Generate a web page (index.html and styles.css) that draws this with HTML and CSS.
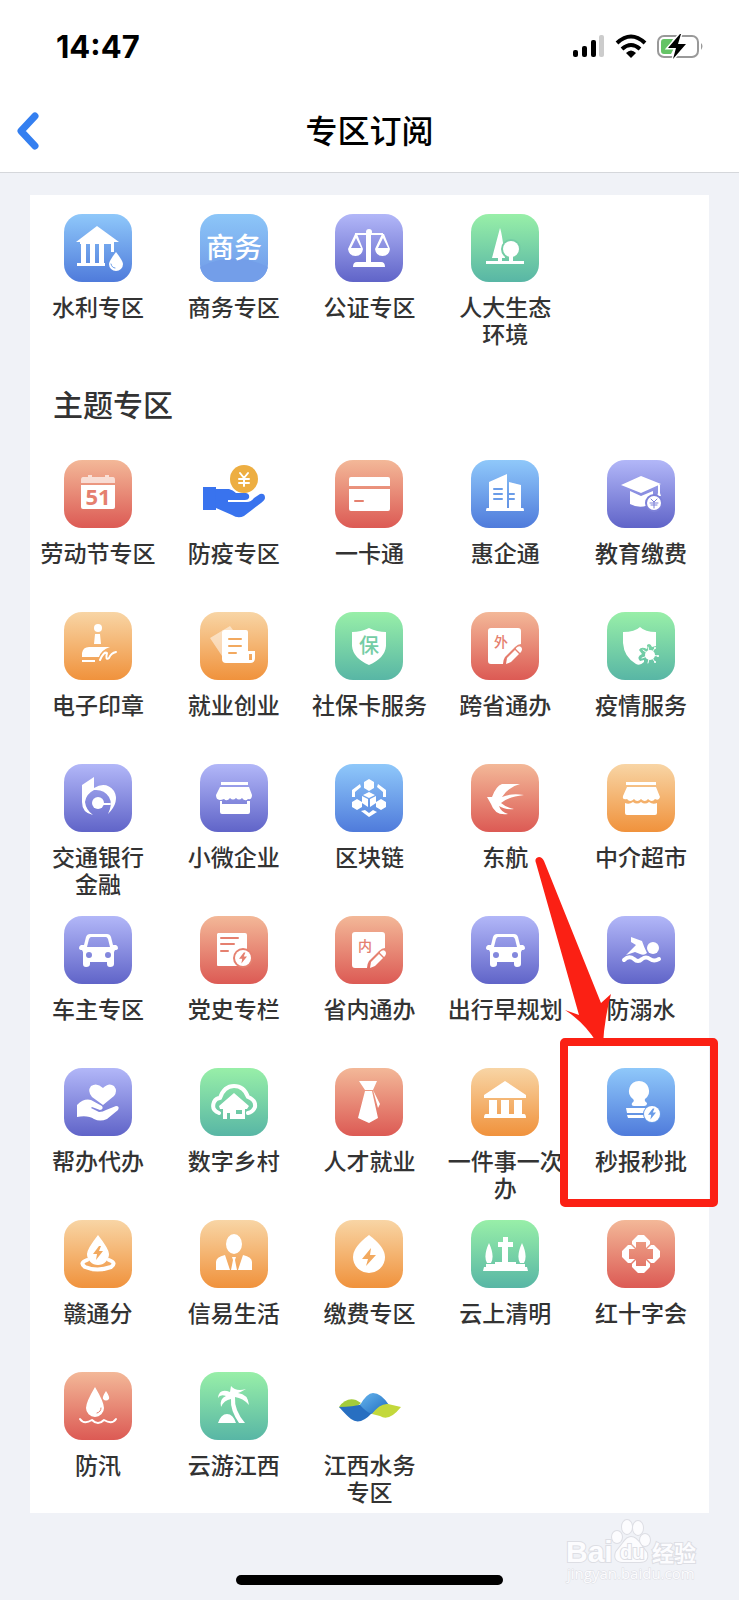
FILE: index.html
```html
<!DOCTYPE html>
<html lang="zh-CN">
<head>
<meta charset="utf-8">
<meta name="viewport" content="width=device-width, initial-scale=1">
<title>专区订阅</title>
<link rel="stylesheet" href="styles.css">
</head>
<body>
<svg class="defs" aria-hidden="true">
  <symbol id="car" viewBox="0 0 68 68">
    <path fill-rule="evenodd" d="M26 18H43Q46 18 47 21L49 29H52Q54 30 54 32Q54 34 51 34L50 36V48Q50 51 46 51Q43 51 43 48V46H26V48Q26 51 22 51Q19 51 19 48V36L18 34Q15 34 15 32Q15 30 17 29H20L22 21Q23 18 26 18ZM27 21Q26 21 25 23L23 31H46L44 23Q43 21 42 21ZM25 36A3 3 0 1 0 25 42A3 3 0 1 0 25 36ZM44 36A3 3 0 1 0 44 42A3 3 0 1 0 44 36Z"/>
  </symbol>
  <symbol id="sheet" viewBox="0 0 68 68">
    <path d="M20 16H47Q50 16 50 19V32Q47 32 44 35L34 45Q32 48 32 52H20Q17 52 17 49V19Q17 16 20 16Z"/>
    <path d="M35 52L36 46L44 38L48 42L40 50Z"/>
    <path d="M45 36Q48 33 50 35Q52 37 50 40L49 41L45 37Z"/>
  </symbol>
  <symbol id="bolt" viewBox="0 0 10 14"><path d="M6 0L0 8H4L3 14L10 5H6L8 0Z"/></symbol>
</svg>

<header class="top">
  <div class="status">
    <span class="time">14:47</span>
    <svg class="status-icons" viewBox="0 0 134 26" aria-label="信号、无线网络、电池">
      <rect x="1" y="16" width="5" height="7" rx="2"/>
      <rect x="10" y="12" width="5" height="11" rx="2"/>
      <rect x="19" y="6" width="5" height="17" rx="2"/>
      <rect x="27" y="1" width="5" height="22" rx="2" fill="#ccc"/>
      <g fill="none" stroke="#000" stroke-width="4">
        <path d="M45 9Q59 -4 73 9"/><path d="M50 15Q59 7 68 15"/>
      </g>
      <path d="M54 19Q59 14 64 19L59 24Z"/>
      <rect x="86" y="2" width="40" height="21" rx="6" fill="none" stroke="#999" stroke-width="2"/>
      <path d="M129 9Q132 12 129 16Z" fill="#999"/>
      <path d="M92 5H101L97 14H102L99 20H92Q89 20 89 17V8Q89 5 92 5Z" fill="#65c466"/>
      <path d="M108 0L96 14H104L101 25L114 10H106L109 0Z" stroke="#fff" stroke-width="3" paint-order="stroke"/>
    </svg>
  </div>
  <div class="nav">
    <button class="back" type="button" aria-label="返回">
      <svg viewBox="0 0 26 40"><path d="M20 5L6 20L20 35" fill="none" stroke="#347ff0" stroke-width="7" stroke-linecap="round" stroke-linejoin="round"/></svg>
    </button>
    <h1>专区订阅</h1>
  </div>
</header>

<main class="card">
  <ul class="grid">
    <li><a href="#"><svg class="tile blue" viewBox="0 0 68 68"><path d="M33 12L55 28H12ZM16 28H50V38H47V30H40V49H41V52H13V49H17V30H16ZM22 30V49H26V30ZM31 30V49H35V30Z" fill-rule="evenodd"/><path d="M52 38Q45 47 45 50A7 7 0 0 0 59 50Q59 47 52 38Z"/><path class="line thin" d="M47 50Q48 54 51 54"/></svg><span>水利专区</span></a></li>
    <li><a href="#"><svg class="tile sky" viewBox="0 0 68 68"><path d="M0 53Q33 36 68 53V68H0Z" fill="#739ee9"/><text x="34" y="44" font-size="28">商务</text></svg><span>商务专区</span></a></li>
    <li><a href="#"><svg class="tile purple" viewBox="0 0 68 68"><circle cx="34" cy="18" r="3"/><path d="M20 19H48V21H36V48H46Q50 48 50 53H18Q18 48 22 48H31V21H20Z"/><path fill-rule="evenodd" d="M20 20L13 35Q14 42 20.500 42Q27 42 28 35L22 20ZM21 24L26 34H16Z"/><path fill-rule="evenodd" d="M47 20L40 35Q41 42 47.500 42Q54 42 55 35L49 20ZM48 24L53 34H43Z"/></svg><span>公证专区</span></a></li>
    <li><a href="#"><svg class="tile green" viewBox="0 0 68 68"><path d="M29 14Q31 19 34 44H31V48H27V44H21Z"/><circle class="cut" cx="40" cy="35" r="10"/><circle cx="40" cy="35" r="8"/><path d="M38 40H42V47H53V50H15V47H38Z"/></svg><span>人大生态<br>环境</span></a></li>
  </ul>

  <h2>主题专区</h2>

  <ul class="grid">
    <li><a href="#"><svg class="tile red" viewBox="0 0 68 68"><path opacity=".65" d="M19 17H24V15H28V17H41V15H45V17H49Q51 17 51 20V23H17V20Q17 17 19 17Z"/><path d="M17 25H51V47Q51 49 49 49H19Q17 49 17 47Z"/><text class="cut num" x="34" y="45" font-size="22">51</text></svg><span>劳动节专区</span></a></li>
    <li><a href="#"><svg class="tile" viewBox="0 0 68 68"><g fill="#3973ee"><path d="M3 27H16V50H3Z"/><path d="M15 29H29Q33 30 36 33H46Q50 34 49 38Q48 40 45 40H28V42H47Q51 42 54 38L60 34Q65 33 65 38Q65 40 61 43L44 56Q38 59 32 55L16 48Z"/></g><circle cx="44" cy="19" r="14" fill="#edae42"/><path class="wline" d="M40 13L44 18L48 13M39 19H49M39 23H49M44 18V26"/></svg><span>防疫专区</span></a></li>
    <li><a href="#"><svg class="tile red" viewBox="0 0 68 68"><path d="M16 17H53Q55 17 55 19V26H14V19Q14 17 16 17ZM14 29H55V49Q55 51 53 51H16Q14 51 14 49Z"/><path class="line" d="M20 41H28"/></svg><span>一卡通</span></a></li>
    <li><a href="#"><svg class="tile blue" viewBox="0 0 68 68"><path d="M18 22L36 14V48H38V22L50 25V48H52Q53 48 53 51H15Q15 48 16 48H18Z"/><path class="line" d="M23 29H31M23 34H31M23 39H31M38 34H43M38 39H43"/></svg><span>惠企通</span></a></li>
    <li><a href="#"><svg class="tile purple" viewBox="0 0 68 68"><path d="M34 16L54 24L34 33L14 25ZM23 31L34 36L46 31V43Q34 50 23 44ZM51 25H53V33L54 36H50L51 33Z"/><circle class="cut" cx="47" cy="43" r="9"/><circle cx="47" cy="43" r="7"/><path class="line thin" d="M44 39L47 42L50 39M43 43H51M44 45H50M47 42V48"/></svg><span>教育缴费</span></a></li>

    <li><a href="#"><svg class="tile orange" viewBox="0 0 68 68"><circle cx="34" cy="16" r="4"/><path d="M31 22H36L37 32H30ZM18 45V41Q19 35 25 35H46Q37 38 35 45ZM18 48H31V50H18Z"/><path class="wline" d="M36 48Q40 39 43 41Q41 49 45 46Q47 41 52 40"/></svg><span>电子印章</span></a></li>
    <li><a href="#"><svg class="tile orange" viewBox="0 0 68 68"><path opacity=".5" d="M10 26L30 14L33 18H22V44Z"/><path fill-rule="evenodd" d="M24 18H46Q48 18 48 20V39H55V46Q55 51 50 51H26Q22 51 22 47V20Q22 18 24 18ZM49 42V48H52V42Z"/><path class="line" d="M29 27H41M29 34H41M29 41H36"/></svg><span>就业创业</span></a></li>
    <li><a href="#"><svg class="tile green" viewBox="0 0 68 68"><path d="M34 16Q42 20 51 20V34Q50 46 34 53Q18 46 17 34V20Q26 20 34 16Z"/><text class="cut" x="34" y="41" font-size="20">保</text></svg><span>社保卡服务</span></a></li>
    <li><a href="#"><svg class="tile red" viewBox="0 0 68 68"><use href="#sheet"/><text class="cut" x="30" y="35" font-size="14">外</text></svg><span>跨省通办</span></a></li>
    <li><a href="#"><svg class="tile green" viewBox="0 0 68 68"><path d="M33 15Q38 20 49 20V34L45 35Q43 30 40 33V37Q34 34 32 38L35 42Q29 45 33 49L37 48V50Q33 54 29 52Q17 45 16 31V20Q28 20 33 15Z"/><circle cx="43" cy="43" r="5"/><path class="wline thin" d="M43 43L41 35M43 43L48 36M43 43L51 44M43 43L48 50M43 43L41 51M43 43L35 46M43 43L36 38"/><circle cx="48" cy="36" r="1"/><circle cx="51" cy="44" r="1"/><circle cx="48" cy="50" r="1"/></svg><span>疫情服务</span></a></li>

    <li><a href="#"><svg class="tile purple" viewBox="0 0 68 68"><path d="M18 21L30 13V26Q22 30 21 38Q22 46 29 51Q18 49 18 38ZM30 24Q42 17 50 27Q56 38 44 50Q49 40 45 33Q40 25 30 26Z"/><circle cx="34" cy="39" r="6"/><path class="wline" d="M39 40H46"/></svg><span>交通银行<br>金融</span></a></li>
    <li><a href="#"><svg class="tile purple" viewBox="0 0 68 68"><path d="M21 18H48V21H21ZM20 23H49L52 31Q52 36 48 35Q45 38 42 34Q39 37 36 34Q33 37 30 34Q27 38 24 35Q16 38 16 31ZM20 37H22V40H47V37H50V48Q50 50 48 50H22Q20 50 20 48Z"/></svg><span>小微企业</span></a></li>
    <li><a href="#"><svg class="tile blue" viewBox="0 0 68 68"><path d="M34 15L39 18V24L34 27L29 24V18ZM22 35L27 38V43L22 46L17 43V38ZM46 35L51 38V43L46 46L41 43V38ZM17 26L25 20L26 23L20 28V33H17ZM51 26L43 20L42 23L48 28V33H51ZM34 28L40 31L34 34L28 31ZM27 32L33 35V43L27 39ZM41 32L35 35V43L41 39ZM26 47L30 46L34 49L38 46L42 48L34 53Z"/></svg><span>区块链</span></a></li>
    <li><a href="#"><svg class="tile red" viewBox="0 0 68 68"><path d="M16 33L21 33Q25 22 31 20L49 20Q37 23 31 33Q40 29 53 31Q37 33 30 39Q36 44 43 45Q34 46 28 42Q30 48 37 50Q24 52 20 40Z"/></svg><span>东航</span></a></li>
    <li><a href="#"><svg class="tile orange" viewBox="0 0 68 68"><path d="M19 18H49V21H19ZM20 23H49L53 33Q52 37 48 35Q45 39 41 35Q38 39 34 35Q30 39 27 35Q23 39 20 35Q15 36 16 32ZM18 39Q22 41 26 38Q30 41 34 38Q38 41 42 38Q46 41 50 39V49Q50 51 48 51H20Q18 51 18 49Z"/></svg><span>中介超市</span></a></li>

    <li><a href="#"><svg class="tile purple" viewBox="0 0 68 68"><use href="#car"/></svg><span>车主专区</span></a></li>
    <li><a href="#"><svg class="tile red" viewBox="0 0 68 68"><path d="M18 17H45Q47 17 47 19V50H18Q17 50 17 49V18Z"/><path class="line" d="M21 22H38M21 28H34M21 35H28"/><circle class="cut" cx="43" cy="42" r="10"/><circle cx="43" cy="42" r="8"/><use class="cut" href="#bolt" x="39" y="36" width="8" height="12"/></svg><span>党史专栏</span></a></li>
    <li><a href="#"><svg class="tile red" viewBox="0 0 68 68"><use href="#sheet"/><text class="cut" x="30" y="35" font-size="14">内</text></svg><span>省内通办</span></a></li>
    <li><a href="#"><svg class="tile purple" viewBox="0 0 68 68"><use href="#car"/></svg><span>出行早规划</span></a></li>
    <li><a href="#"><svg class="tile purple" viewBox="0 0 68 68"><circle cx="46" cy="32" r="6"/><path d="M24 21L35 25Q37 31 40 37Q37 40 33 38L28 36L19 39L29 29L24 26Z"/><path class="wline wide" d="M17 44Q22 39 27 43Q31 47 35 43Q39 40 43 43Q47 46 52 43"/></svg><span>防溺水</span></a></li>

    <li><a href="#"><svg class="tile purple" viewBox="0 0 68 68"><path d="M39 37L28 29Q23 23 27 18Q33 14 39 20Q45 14 50 18Q54 23 50 28Z"/><path d="M13 37Q20 30 27 32L38 38Q40 41 36 42L28 39L27 40L35 44Q39 44 42 42L52 38Q56 38 54 42L43 51Q36 54 30 51Q24 47 13 49Z"/></svg><span>帮办代办</span></a></li>
    <li><a href="#"><svg class="tile green" viewBox="0 0 68 68"><path class="wline wide" d="M19 45Q11 42 14 34Q16 30 20 30Q24 18 34 18Q44 18 48 29Q56 32 55 39Q53 44 48 45"/><path fill-rule="evenodd" d="M34 25L49 38L47 41H45V51H30V45H27V51H23V41H20L19 38ZM36 42V46H42V42Z"/></svg><span>数字乡村</span></a></li>
    <li><a href="#"><svg class="tile red" viewBox="0 0 68 68"><path d="M24 13H42L38 22H30ZM30 23H37L43 50L34 55L23 50ZM38 22L45 36L43 40Z"/></svg><span>人才就业</span></a></li>
    <li><a href="#"><svg class="tile orange" viewBox="0 0 68 68"><path d="M34 13L55 27V30H13V27ZM18 32H26V46H30V32H38V46H43V32H51V46H53Q55 46 55 50H13Q13 46 15 46H18Z"/></svg><span>一件事一次<br>办</span></a></li>
    <li class="marked"><a href="#"><svg class="tile blue" viewBox="0 0 68 68"><path d="M32 13A10 10 0 0 1 38 31Q37 33 40 35Q40 38 37 38H27Q24 38 25 35Q28 33 26 31A10 10 0 0 1 32 13ZM19 40H38V45H20ZM20 47H38V50H21Z"/><circle class="cut" cx="45" cy="46" r="9"/><circle cx="45" cy="46" r="8"/><use class="cut" href="#bolt" x="41" y="40" width="8" height="12"/></svg><span>秒报秒批</span></a>
      <div class="frame" aria-hidden="true"></div>
      <svg class="arrow" viewBox="0 0 48 190" aria-hidden="true"><path d="M1 6Q-1 1 4 0Q7 0 9 4L66 146L76 137Q69 164 68 188L62 186Q50 166 30 153L44 158Z" fill="#fb2014"/></svg>
    </li>

    <li><a href="#"><svg class="tile orange" viewBox="0 0 68 68"><path d="M34 15Q23 29 23 34A11 11 0 0 0 45 34Q45 29 34 15Z"/><use class="cut" href="#bolt" x="29" y="26" width="10" height="14"/><path class="wline wide" d="M23 40Q15 43 21 47Q33 52 47 47Q53 43 45 40"/></svg><span>赣通分</span></a></li>
    <li><a href="#"><svg class="tile orange" viewBox="0 0 68 68"><ellipse cx="34" cy="24" rx="8" ry="10"/><path d="M25 35L30 50H16V42Q16 37 25 35ZM43 35L38 50H52V42Q52 37 43 35ZM32 37H36L35 40L37 50H31L33 40Z"/></svg><span>信易生活</span></a></li>
    <li><a href="#"><svg class="tile orange" viewBox="0 0 68 68"><path d="M34 15Q18 27 18 37A16 16 0 0 0 50 37Q50 27 34 15Z"/><path class="cut" d="M36 28L27 39H33L31 46L41 35H35Z"/></svg><span>缴费专区</span></a></li>
    <li><a href="#"><svg class="tile green" viewBox="0 0 68 68"><path d="M32 17H37V22H42V27H37V42H45V44H54V47H56L57 51H12L13 47H15V44H24V42H31V27H27V22H32ZM18 23Q24 36 20 43H16Q12 36 18 23ZM51 23Q57 36 53 43H49Q45 36 51 23Z"/></svg><span>云上清明</span></a></li>
    <li><a href="#"><svg class="tile red" viewBox="0 0 68 68"><path d="M31 15H37L43 21V24L39 28V22H29V28L25 24V21ZM31 53H37L43 47V44L39 40V46H29V40L25 44V47ZM15 31V37L21 43H24L28 39H22V29H28L24 25H21ZM53 31V37L47 43H44L40 39H46V29H40L44 25H47Z"/></svg><span>红十字会</span></a></li>

    <li><a href="#"><svg class="tile red" viewBox="0 0 68 68"><path d="M31 15Q22 30 22 36A9 9 0 0 0 40 36Q40 30 31 15ZM42 19Q38 25 39 27Q42 30 45 27Q46 25 42 19Z"/><path class="line thin" d="M33 41Q37 40 37 36"/><path class="wline" d="M16 47Q20 53 28 48Q34 54 40 48Q48 53 52 47"/></svg><span>防汛</span></a></li>
    <li><a href="#"><svg class="tile green" viewBox="0 0 68 68"><path d="M31 14Q36 20 46 17Q41 20 38 21Q48 22 49 33Q43 26 35 25Q34 38 45 51H39Q30 38 31 27Q24 28 21 35Q19 27 26 24Q20 22 18 26Q19 16 30 20ZM18 51Q21 42 27 42Q33 42 36 51Z"/></svg><span>云游江西</span></a></li>
    <li><a href="#"><svg class="tile" viewBox="0 0 68 68"><defs><linearGradient id="wave" x2="1" y2="1"><stop stop-color="#66b5ed"/><stop offset="1" stop-color="#1f6bc0"/></linearGradient></defs><path d="M4 35Q11 25 21 28L26 31Q18 38 12 39Z" fill="#a4cc3b"/><path d="M4 35Q18 35 28 32Q32 39 37 41Q25 54 16 47Q12 44 4 35Z" fill="#286fc1"/><path d="M25 33Q32 21 38 21Q46 21 54 33Q44 35 37 42Q31 40 25 33Z" fill="url(#wave)"/><path d="M37 42Q45 31 53 32L66 35Q54 50 45 44Z" fill="#c3d83b"/></svg><span>江西水务<br>专区</span></a></li>
  </ul>
</main>

<footer class="foot">
  <div class="home"></div>
  <svg class="watermark" viewBox="0 0 136 66" aria-label="Baidu经验">
    <g fill="#fcfcfe" stroke="#dddee4" stroke-width="2" paint-order="stroke">
      <text class="latin" x="0" y="44" font-size="30">Bai</text>
      <ellipse cx="51" cy="19" rx="5" ry="6"/><ellipse cx="61" cy="9" rx="5" ry="7"/><ellipse cx="72" cy="10" rx="5" ry="7"/><ellipse cx="79" cy="22" rx="5" ry="6"/>
      <path d="M65 19Q70 19 75 27L81 35Q83 44 74 44H56Q47 43 50 34L57 25Q61 19 65 19Z"/>
      <text class="latin" x="54" y="41" font-size="20">du</text>
      <text class="cjk" x="86" y="43" font-size="22">经验</text>
      <text class="url" x="1" y="61" font-size="15">jingyan.baidu.com</text>
    </g>
  </svg>
</footer>
</body>
</html>
```
FILE: styles.css
```css
* { box-sizing: border-box; }

body {
  margin: 0;
  min-height: 100vh;
  display: flex;
  flex-direction: column;
  background: #f0f2f7;
  color: #333;
  font-family: "Noto Sans CJK SC", sans-serif;
}

.defs { display: none; }

.top {
  background: #fff;
  border-bottom: 1px solid #d5d7db;
}

.status {
  display: flex;
  justify-content: space-between;
  align-items: center;
  height: 92px;
  padding: 2px 33px 0 56px;
}

.time {
  color: #000;
  font: 700 31px/32px Inter, sans-serif;
}

.status-icons { width: 134px; height: 26px; }

.nav {
  display: grid;
  grid-template-columns: 60px 1fr 60px;
  align-items: center;
  height: 80px;
  padding-bottom: 6px;
}

.back {
  display: flex;
  padding: 4px 0 0 14px;
  border: 0;
  background: none;
}

.back svg { width: 28px; height: 40px; }

h1 {
  margin: 0;
  color: #000;
  font-size: 32px;
  font-weight: 500;
  line-height: 40px;
  text-align: center;
}

.card {
  margin: 22px 30px 0;
  padding: 19px 0 8px;
  background: #fff;
}

.grid {
  display: grid;
  grid-template-columns: repeat(5, 1fr);
  grid-auto-rows: minmax(133px, auto);
  row-gap: 19px;
  margin: 0;
  padding: 0;
  list-style: none;
}

.grid a {
  display: flex;
  flex-direction: column;
  align-items: center;
  gap: 11px;
  color: inherit;
  font-size: 23px;
  font-weight: 500;
  line-height: 27px;
  text-align: center;
  text-decoration: none;
  white-space: nowrap;
}

h2 {
  margin: 33px 0 34px 23px;
  font-size: 30px;
  font-weight: 500;
  line-height: 46px;
}

.tile {
  width: 68px;
  height: 68px;
  border-radius: 18px;
  fill: #fff;
}

.tile text {
  font-family: "Noto Sans CJK SC", sans-serif;
  font-weight: 500;
  text-anchor: middle;
}

.tile .num {
  font-family: "Noto Sans", sans-serif;
  font-weight: 700;
}

.blue { --ink: #6a9ce8; background: linear-gradient(#8fc8fa, #4f7bdb); }
.sky { --ink: #78a6ec; background: linear-gradient(#8cc6f8, #6f98e6); }
.purple { --ink: #7d81d9; background: linear-gradient(#b2b7f8, #6064c8); }
.green { --ink: #74cda5; background: linear-gradient(#98efa8, #58b6a5); }
.red { --ink: #e5806f; background: linear-gradient(#f3b898, #dc5a54); }
.orange { --ink: #f2a95f; background: linear-gradient(#f8d5a5, #f0923c); }

.cut { fill: var(--ink); }

.line,
.wline {
  fill: none;
  stroke: var(--ink);
  stroke-width: 2;
  stroke-linecap: round;
  stroke-linejoin: round;
}

.wline { stroke: #fff; }
.tile .thin { stroke-width: 1; }
.tile .wide { stroke-width: 4; }

.marked { position: relative; }

.frame {
  position: absolute;
  inset: -30px -9px -6px -13px;
  border: 8px solid #fb2014;
  border-radius: 5px;
}

.arrow {
  position: absolute;
  left: -38px;
  bottom: 154px;
  width: 48px;
  height: 190px;
  overflow: visible;
}

.foot {
  position: relative;
  flex: 1;
  display: flex;
  align-items: flex-end;
  justify-content: center;
  min-height: 87px;
  padding-bottom: 15px;
}

.home {
  width: 36%;
  height: 10px;
  border-radius: 5px;
  background: #000;
}

.watermark {
  position: absolute;
  right: 37px;
  bottom: 16px;
  width: 136px;
  height: 66px;
  overflow: visible;
}

.latin { font-family: "Liberation Sans", sans-serif; font-weight: 700; }
.cjk { font-family: "Noto Sans CJK SC", sans-serif; font-weight: 700; }
.url { font-family: "Open Sans", sans-serif; stroke-width: 1; }
```
